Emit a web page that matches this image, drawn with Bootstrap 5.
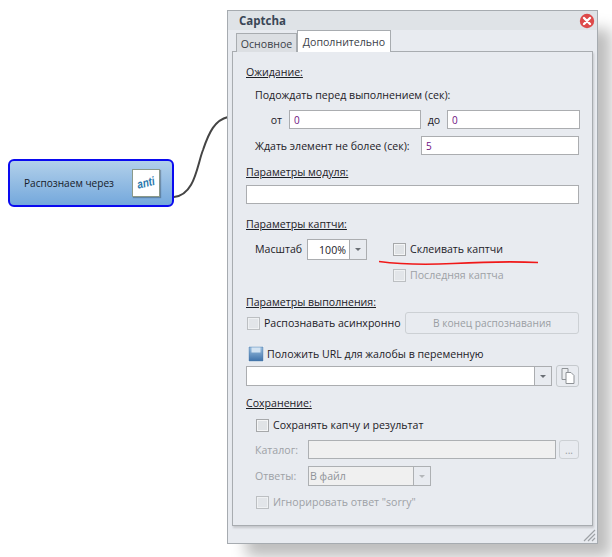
<!DOCTYPE html>
<html lang="ru">
<head>
<meta charset="utf-8">
<title>Captcha</title>
<link rel="stylesheet" href="https://cdn.jsdelivr.net/npm/bootstrap@5.3.0/dist/css/bootstrap.min.css">
<style>
html,body{margin:0;background:#fff;overflow:hidden}
body{font-family:"Open Sans","Noto Sans","Liberation Sans",sans-serif;font-size:10.6px;line-height:14px;color:#1c2026}
.desk{position:relative;width:612px;height:557px;overflow:hidden}
.wire{position:absolute;left:0;top:0;width:612px;height:557px}
.mapnode{position:absolute;left:8px;top:159px;width:166px;height:48px;border:2px solid #0a0af0;border-radius:6px;background:linear-gradient(#b2d0ea,#74a8dc);padding-left:14px;padding-right:12px;color:#17202a;font-size:10.1px}
.logo{width:28px;height:28px;background:#fff;border:1px solid #8b9a8a;box-shadow:1px 1px 1px rgba(0,0,0,.25)}
.win{position:absolute;left:227px;top:10px;width:371px;height:534px;background:#e8ebf0;border:1px solid #a6abb0;box-shadow:16px 16px 14px -3px rgba(0,0,0,.26)}
.win-head{height:19px;background:#dfe3e7;padding-left:11px;padding-right:1px;font-weight:700;font-size:11.5px;color:#3a4656}
.win-tabs{padding-left:8px;height:22px;background:#e8ebf0;border:0;margin-top:0}
.win-tabs .nav-link{font-size:10.6px;line-height:14px;color:#3b4148;border:1px solid #a8acb0;border-bottom:0;border-radius:0;padding:0}
.tab-off{width:61px;height:19px;margin-top:3px;background:#dcdfe3;text-align:center;padding-top:3px!important}
.tab-on{width:94px;height:22px;background:#fff!important;text-align:center;padding-top:4px!important;position:relative;z-index:2}
.pane{margin-left:4px;width:361px;height:475px;margin-top:-1px;border:1px solid #a8acb0;background:#e8ebf0;padding:12px 13px 0 13px;box-shadow:1px 2px 2px rgba(0,0,0,.15)}
.ln{display:flex;align-items:center;white-space:nowrap}
.h16{height:16px}.h19{height:19px}.h20{height:20px}.h22{height:22px}.h44{height:44px}
.t2{margin-top:2px}.t3{margin-top:3px}.t5{margin-top:5px}.t6{margin-top:6px}.t7{margin-top:7px}.t8{margin-top:8px}.t9{margin-top:9px}.t11{margin-top:11px}.t12{margin-top:12px}
.in1{padding-left:1px}.in9{padding-left:9px}.in10{padding-left:10px}
.dim{color:#9da1a6}
.fld{display:block;height:19px;min-height:0;padding:0 4px;font:inherit;font-size:10px;line-height:15px;border:1px solid #abadb0;border-radius:0;background:#fff;color:#6f0f7f;box-shadow:none}
.fld.off{background:#f0f0f0;border-color:#adb0b3}
.w131{width:132px}.w132{width:133px}.w157{width:158px}.wfull{width:333px}.w248{width:248px}
.lab-ot{width:34px;text-align:right;padding-right:7px;flex:none}
.lab-do{width:26px;text-align:center;flex:none}
.lab-wait{width:166px;flex:none}
.lab-scale{width:52px;flex:none}
.lab-cat{width:53px;flex:none}
.combo{display:flex;height:21px;border:1px solid #abadb0;background:#fff;flex:none}
.combo-val{flex:1;display:flex;align-items:center;justify-content:flex-end;padding-right:3px;color:#1c2026}
.combo-btn{width:17px;background:#e8ebf0;border-left:1px solid #abadb0;display:flex;align-items:center;justify-content:center}
.tri{width:0;height:0;border-left:3.5px solid transparent;border-right:3.5px solid transparent;border-top:3px solid #6a6f75}
.combo-scale{width:60px}
.combo-url{width:306px;height:20px}
.combo-ans{width:123px;background:#f0f0f0;border-color:#adb0b3;height:20px;color:#8f9398}
.combo-ans .combo-val{justify-content:flex-start;padding-left:1px;color:#8f9398}
.combo-ans .combo-btn{border-color:#adb0b3}
.combo-ans .tri{border-top-color:#b4b7ba}
.right-col{padding-top:2px;margin-left:26px}
input.form-check-input.chk[type=checkbox]{flex:none;width:13px;height:13px;margin:0 4px 0 0;border:1px solid #a6a8aa;border-radius:0;background:#e0e3e6;box-shadow:inset 0 0 0 1px #f4f5f6;appearance:none;opacity:1}
input.form-check-input.chk[type=checkbox]:disabled{opacity:.65;pointer-events:none}
.rowchk2{margin-top:10px}
.flatbtn{display:flex;align-items:center;justify-content:center;padding:0;font:inherit;font-size:10.2px;color:#9a9ea3;background:#e8ebf0;border:1px solid #ccd0d4;border-radius:3px;opacity:1}
.btn-end{width:174px;height:22px;margin-left:8px;--bs-btn-disabled-color:#9a9ea3;--bs-btn-disabled-bg:#e8ebf0;--bs-btn-disabled-border-color:#ccd0d4;--bs-btn-disabled-opacity:1}
.btn-copy{width:23px;height:22px;margin-left:4px;border-color:#c5c9cd}
.btn-more{width:20px;height:19px;margin-left:3px;--bs-btn-disabled-color:#9a9ea3;--bs-btn-disabled-bg:#e8ebf0;--bs-btn-disabled-border-color:#ccd0d4;--bs-btn-disabled-opacity:1}
.lab-async{width:151px;flex:none}
.grip{position:absolute;right:1px;bottom:1px;width:13px;height:13px}
.closer{width:16px;height:16px;display:block;margin-left:auto;margin-right:1px}
.floppy{width:16px;height:16px;margin-left:2px;margin-right:3px;flex:none}
.redline{position:absolute;left:150px;top:249px;width:162px;height:8px;pointer-events:none}
</style>
</head>
<body>
<div class="desk">
  <svg class="wire" viewBox="0 0 612 557" aria-hidden="true"><path d="M174 197C195 195 197 165 203 150C209 132 215 120 228 117" fill="none" stroke="#444" stroke-width="2"/></svg>
  <div class="mapnode d-flex align-items-center justify-content-between">
    <span>Распознаем через</span>
    <svg class="logo" viewBox="0 0 28 28" aria-hidden="true"><text x="14" y="18" text-anchor="middle" font-family="Liberation Sans, sans-serif" font-style="italic" font-weight="700" font-size="13" fill="#2a78ad" transform="rotate(-14 14 14)" textLength="19" lengthAdjust="spacingAndGlyphs">anti</text></svg>
  </div>

  <div class="win">
    <div class="win-head d-flex align-items-center">
      <span>Captcha</span>
      <svg class="closer" viewBox="0 0 16 16" aria-hidden="true"><circle cx="8" cy="8" r="7.2" fill="#dd4a4a"/><path d="M5 5l6 6M11 5l-6 6" stroke="#fff" stroke-width="2.4" stroke-linecap="round"/></svg>
    </div>
    <ul class="nav win-tabs align-items-start">
      <li class="nav-item"><a class="nav-link tab-off" href="#">Основное</a></li>
      <li class="nav-item"><a class="nav-link tab-on" href="#">Дополнительно</a></li>
    </ul>
    <div class="pane">
      <div class="ln h16"><span class="text-decoration-underline">Ожидание:</span></div>
      <div class="ln h16 t7 in9">Подождать перед выполнением (сек):</div>
      <div class="ln h19 t7 in9">
        <span class="lab-ot">от</span><input class="form-control fld w131" value="0">
        <span class="lab-do">до</span><input class="form-control fld w132" value="0">
      </div>
      <div class="ln h19 t7 in9">
        <span class="lab-wait">Ждать элемент не более (сек):</span><input class="form-control fld w157" value="5">
      </div>
      <div class="ln h16 t9"><span class="text-decoration-underline">Параметры модуля:</span></div>
      <input class="form-control fld wfull t5" value="">
      <div class="ln h16 t12"><span class="text-decoration-underline">Параметры каптчи:</span></div>
      <div class="d-flex align-items-start h44 t7 in9">
        <span class="lab-scale ln h20">Масштаб</span>
        <div class="combo combo-scale"><div class="combo-val">100%</div><div class="combo-btn"><span class="tri"></span></div></div>
        <div class="right-col">
          <label class="ln h16"><input class="form-check-input chk" type="checkbox">Склеивать каптчи</label>
          <label class="ln h16 rowchk2 dim"><input class="form-check-input chk" type="checkbox" disabled>Последняя каптча</label>
        </div>
      </div>
      <div class="ln h16 t11"><span class="text-decoration-underline">Параметры выполнения:</span></div>
      <div class="ln h22 t2">
        <label class="ln lab-async in1"><input class="form-check-input chk" type="checkbox" disabled>Распознавать асинхронно</label>
        <button class="btn flatbtn btn-end" type="button" disabled>В конец распознавания</button>
      </div>
      <div class="ln h16 t12">
        <svg class="floppy" viewBox="0 0 16 16" aria-hidden="true"><defs><linearGradient id="fl" x1="0" y1="0" x2="0" y2="1"><stop offset="0" stop-color="#9cc0e0"/><stop offset="1" stop-color="#3f72aa"/></linearGradient></defs><rect width="16" height="16" fill="#fff"/><rect x="1" y="1" width="14" height="14" fill="url(#fl)" stroke="#4a78a8" stroke-width=".6"/><rect x="3.5" y="1.5" width="9" height="5" fill="#d3e3f2"/></svg>
        <span>Положить URL для жалобы в переменную</span>
      </div>
      <div class="ln h22 t3">
        <div class="combo combo-url"><div class="combo-val"></div><div class="combo-btn"><span class="tri"></span></div></div>
        <button class="btn flatbtn btn-copy" type="button" aria-label="Копировать">
          <svg width="14" height="16" viewBox="0 0 14 16" aria-hidden="true"><path d="M1 .5h6v11H1z" fill="#eceef0" stroke="#8e9296"/><path d="M5 4.5h5l3 3v8H5z" fill="#fff" stroke="#8e9296"/></svg>
        </button>
      </div>
      <div class="ln h16 t8"><span class="text-decoration-underline">Сохранение:</span></div>
      <label class="ln h16 t6 in10"><input class="form-check-input chk" type="checkbox">Сохранять капчу и результат</label>
      <div class="ln h19 t7 in9 dim">
        <span class="lab-cat">Каталог:</span><input class="form-control fld off w248" disabled>
        <button class="btn flatbtn btn-more" type="button" disabled>...</button>
      </div>
      <div class="ln h20 t7 in9 dim">
        <span class="lab-cat">Ответы:</span>
        <div class="combo combo-ans"><div class="combo-val">В файл</div><div class="combo-btn"><span class="tri"></span></div></div>
      </div>
      <label class="ln h16 t8 in10 dim"><input class="form-check-input chk" type="checkbox" disabled>Игнорировать ответ "sorry"</label>
      <svg class="redline" viewBox="0 0 162 8" aria-hidden="true"><path d="M1 1.5C20 4 45 5 75 3.5S130 1 160 2.5" fill="none" stroke="#f01818" stroke-width="1.6"/></svg>
    </div>
    <svg class="grip" viewBox="0 0 13 13" aria-hidden="true"><path d="M1 12L12 1M5 12l7-7M9 12l3-3" stroke="#9ea2a6" stroke-width="1.2"/></svg>
  </div>
</div>
<script src="https://cdn.jsdelivr.net/npm/bootstrap@5.3.0/dist/js/bootstrap.bundle.min.js"></script>
</body>
</html>
